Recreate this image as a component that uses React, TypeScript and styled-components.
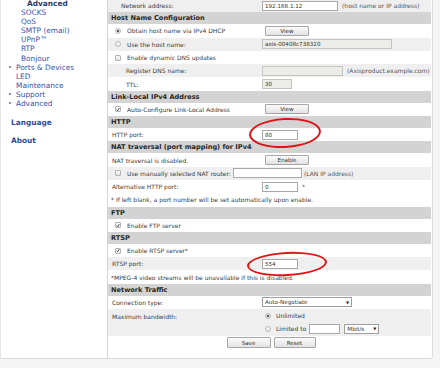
import styled, { createGlobalStyle } from 'styled-components';

const GlobalStyle = createGlobalStyle`
  html, body {
    margin: 0;
    padding: 0;
    background: #f5f5f5;
  }
  body {
    font-family: 'DejaVu Sans', Verdana, sans-serif;
    color: #3a3a3a;
    overflow: hidden;
  }
`;

type Mark = 'check' | 'radio';

const Tick = ({ kind, on }: { kind: Mark; on?: boolean }) =>
  kind === 'check' ? (
    <CheckBox>
      {on && (
        <svg width="5" height="5" viewBox="0 0 10 10">
          <path d="M1.5 5.5 L4 8 L8.5 1.5" fill="none" stroke="#333" strokeWidth="2" />
        </svg>
      )}
    </CheckBox>
  ) : (
    <RadioDot $on={on} />
  );

const App = () => {
  return (
    <>
      <GlobalStyle />
      <Layout>
        <Sidebar>
          <NavTitle>Advanced</NavTitle>
          <SubLink>SOCKS</SubLink>
          <SubLink>QoS</SubLink>
          <SubLink>SMTP (email)</SubLink>
          <SubLink>UPnP™</SubLink>
          <SubLink>RTP</SubLink>
          <SubLink>Bonjour</SubLink>
          <NavLink $bullet>Ports &amp; Devices</NavLink>
          <NavLink>LED</NavLink>
          <NavLink>Maintenance</NavLink>
          <NavLink $bullet>Support</NavLink>
          <NavLink $bullet>Advanced</NavLink>
          <TopLink>Language</TopLink>
          <TopLink>About</TopLink>
        </Sidebar>

        <Main>
          <Row $shade>
            <Label $indent={13}>Network address:</Label>
            <Field>
              <TextBox $w={76}>192.168.1.12</TextBox>
              <Hint>(host name or IP address)</Hint>
            </Field>
          </Row>

          <Header>Host Name Configuration</Header>
          <Row>
            <CheckLabel>
              <Tick kind="radio" on />
              Obtain host name via IPv4 DHCP
            </CheckLabel>
            <Field>
              <Button>View</Button>
            </Field>
          </Row>
          <Row $shade>
            <CheckLabel>
              <Tick kind="radio" />
              Use the host name:
            </CheckLabel>
            <Field>
              <TextBox $w={130} $disabled>
                axis-00408c738320
              </TextBox>
            </Field>
          </Row>
          <Row>
            <CheckLabel>
              <Tick kind="check" />
              Enable dynamic DNS updates
            </CheckLabel>
          </Row>
          <Row $shade>
            <Label $indent={18}>Register DNS name:</Label>
            <Field>
              <TextBox $w={81} $disabled />
              <Hint>(Axisproduct.example.com)</Hint>
            </Field>
          </Row>
          <Row>
            <Label $indent={18}>TTL:</Label>
            <Field>
              <TextBox $w={30} $disabled>
                30
              </TextBox>
            </Field>
          </Row>

          <Header>Link-Local IPv4 Address</Header>
          <Row>
            <CheckLabel>
              <Tick kind="check" on />
              Auto-Configure Link-Local Address
            </CheckLabel>
            <Field>
              <Button>View</Button>
            </Field>
          </Row>

          <Header>HTTP</Header>
          <Row>
            <Label>HTTP port:</Label>
            <Field>
              <TextBox $w={36}>80</TextBox>
            </Field>
          </Row>

          <Header>NAT traversal (port mapping) for IPv4</Header>
          <Row>
            <Label>NAT traversal is disabled.</Label>
            <Field>
              <Button>Enable</Button>
            </Field>
          </Row>
          <Row $shade>
            <WideLine>
              <Tick kind="check" />
              <span>Use manually selected NAT router:</span>
              <TextBox $w={69} $gap={-4} />
              <Hint $gap={-4}>(LAN IP address)</Hint>
            </WideLine>
          </Row>
          <Row>
            <Label>Alternative HTTP port:</Label>
            <Field>
              <TextBox $w={36}>0</TextBox>
              <Hint>*</Hint>
            </Field>
          </Row>
          <Row>
            <Note>* If left blank, a port number will be set automatically upon enable.</Note>
          </Row>

          <Header>FTP</Header>
          <Row>
            <CheckLabel>
              <Tick kind="check" on />
              Enable FTP server
            </CheckLabel>
          </Row>

          <Header>RTSP</Header>
          <Row>
            <CheckLabel>
              <Tick kind="check" on />
              Enable RTSP server*
            </CheckLabel>
          </Row>
          <Row $shade>
            <Label>RTSP port:</Label>
            <Field>
              <TextBox $w={36}>554</TextBox>
            </Field>
          </Row>
          <Row>
            <Note>*MPEG-4 video streams will be unavailable if this is disabled.</Note>
          </Row>

          <Header>Network Traffic</Header>
          <Row>
            <Label>Connection type:</Label>
            <Field>
              <Select $w={90}>
                Auto-Negotiate<Arrow>▼</Arrow>
              </Select>
            </Field>
          </Row>
          <Row $shade $lines={2}>
            <Label $top>Maximum bandwidth:</Label>
            <Stack>
              <Option>
                <Tick kind="radio" on />
                Unlimited
              </Option>
              <Option>
                <Tick kind="radio" />
                Limited to
                <TextBox $w={31} $gap={-2} />
                <Select $w={35} $gap={-1}>
                  Mbit/s<Arrow>▼</Arrow>
                </Select>
              </Option>
            </Stack>
          </Row>
          <Actions>
            <Button $w={44}>Save</Button>
            <Button $w={42}>Reset</Button>
          </Actions>

          <Ring style={{ left: 141, top: 119, width: 72, height: 30 }} />
          <Ring style={{ left: 139, top: 253, width: 80, height: 24 }} />
        </Main>
      </Layout>
    </>
  );
};

const Layout = styled('div')`
  display: flex;
  align-items: flex-start;
  margin-top: -1px;
  width: 433px;
`;

const Sidebar = styled('nav')`
  box-sizing: border-box;
  width: 107px;
  height: 360px;
  background: #fff;
  border-left: 1px solid #e6e6e6;
  border-bottom: 1px solid #dadada;
  display: flex;
  flex-direction: column;
  font-size: 7.4px;
  line-height: 9.1px;
`;

const NavTitle = styled('div')`
  padding-left: 26px;
  font-weight: bold;
  color: #2c3a6c;
`;

const SubLink = styled('div')`
  padding-left: 20px;
  color: #3b55ad;
`;

const NavLink = styled('div')<{ $bullet?: boolean }>`
  position: relative;
  padding-left: 15px;
  color: #3552a8;

  &::before {
    content: '';
    display: ${(p) => (p.$bullet ? 'block' : 'none')};
    position: absolute;
    left: 8px;
    top: 3px;
    border-left: 3px solid #3d64c8;
    border-top: 1.5px solid transparent;
    border-bottom: 1.5px solid transparent;
  }
`;

const TopLink = styled('div')`
  padding-left: 10px;
  margin-top: 9.5px;
  font-weight: bold;
  color: #2f4b9c;
`;

const Main = styled('main')`
  position: relative;
  box-sizing: border-box;
  width: 326px;
  height: 360px;
  background: #fff;
  border-left: 1px solid #d4d4d4;
  border-right: 1px solid #dcdcdc;
  border-bottom: 1px solid #dadada;
  border-radius: 0 0 3px 0;
  padding-right: 1px;
  font-size: 6px;
`;

const Header = styled('div')`
  height: 12px;
  display: flex;
  align-items: center;
  padding-left: 3px;
  background: #d3d3d3;
  color: #262626;
  font-weight: bold;
  font-size: 6.6px;
`;

const Row = styled('div')<{ $shade?: boolean; $lines?: number }>`
  display: grid;
  grid-template-columns: 154px 1fr;
  align-items: center;
  height: ${(p) => 13.3 * (p.$lines ?? 1)}px;
  background: ${(p) => (p.$shade ? '#efefef' : '#fff')};
`;

const Label = styled('div')<{ $indent?: number; $top?: boolean }>`
  padding-left: ${(p) => p.$indent ?? 4}px;
  align-self: ${(p) => (p.$top ? 'start' : 'center')};
  margin-top: ${(p) => (p.$top ? 4 : 0)}px;
  white-space: nowrap;
`;

const CheckLabel = styled('div')`
  display: flex;
  align-items: center;
  gap: 6px;
  padding-left: 7px;
  white-space: nowrap;
`;

const WideLine = styled(CheckLabel)`
  grid-column: 1 / -1;
`;

const Note = styled('div')`
  grid-column: 1 / -1;
  padding-left: 3px;
  white-space: nowrap;
`;

const Field = styled('div')`
  display: flex;
  align-items: center;
`;

const Stack = styled('div')`
  display: flex;
  flex-direction: column;
`;

const Option = styled('div')`
  height: 13.3px;
  display: flex;
  align-items: center;
  gap: 5px;
  padding-left: 3px;
`;

const CheckBox = styled('span')`
  box-sizing: border-box;
  width: 6px;
  height: 6px;
  flex: none;
  display: inline-flex;
  align-items: center;
  justify-content: center;
  border: 1px solid #b4b4b4;
  border-radius: 1px;
  background: linear-gradient(#fafafa, #e4e4e4);
`;

const RadioDot = styled('span')<{ $on?: boolean }>`
  box-sizing: border-box;
  width: 6px;
  height: 6px;
  flex: none;
  border-radius: 50%;
  border: 1px solid #b9b9b9;
  background: ${(p) =>
    p.$on ? 'radial-gradient(circle, #555 0 1.2px, #ededed 1.6px)' : 'linear-gradient(#fafafa, #e6e6e6)'};
`;

const TextBox = styled('span')<{ $w: number; $disabled?: boolean; $gap?: number }>`
  box-sizing: border-box;
  display: inline-flex;
  align-items: center;
  width: ${(p) => p.$w}px;
  height: 10px;
  margin-left: ${(p) => p.$gap ?? 0}px;
  padding: 0 2px;
  border: 1px solid ${(p) => (p.$disabled ? '#c4c4c0' : '#a8a8a8')};
  background: ${(p) => (p.$disabled ? '#ecece8' : '#fff')};
  color: #333;
  font-size: 5.6px;
  white-space: nowrap;
`;

const Select = styled(TextBox)`
  justify-content: space-between;
  border-color: #9e9e9e;
`;

const Arrow = styled('span')`
  font-size: 4px;
  color: #222;
`;

const Hint = styled('span')<{ $gap?: number }>`
  margin-left: ${(p) => p.$gap ?? 4}px;
  color: #555;
  white-space: nowrap;
`;

const Button = styled('span')<{ $w?: number }>`
  box-sizing: border-box;
  display: inline-flex;
  align-items: center;
  justify-content: center;
  width: ${(p) => p.$w ?? 44}px;
  height: 10px;
  margin-left: 3px;
  border: 1px solid #a7a7a7;
  border-radius: 1px;
  background: linear-gradient(#fbfbfb, #e2e2e2);
  color: #333;
  font-size: 5.6px;
`;

const Actions = styled('div')`
  display: flex;
  justify-content: center;
  align-items: center;
  gap: 3px;
  height: 14px;
  padding-left: 3px;

  & > span {
    margin-left: 0;
    height: 11px;
  }
`;

const Ring = styled('span')`
  position: absolute;
  box-sizing: border-box;
  border: 2px solid #dd1515;
  border-radius: 50%;
  transform: rotate(-3deg);
  pointer-events: none;
`;

export default App;
